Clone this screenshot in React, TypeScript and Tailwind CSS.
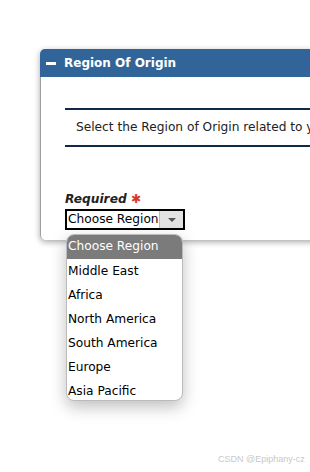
const regions = ["Middle East", "Africa", "North America", "South America", "Europe", "Asia Pacific"];

export default function App() {
  return (
    <div className="relative h-[472px] w-[310px] overflow-hidden bg-white" style={{ fontFamily: '"DejaVu Sans", Verdana, sans-serif' }}>
      <div className="ml-[40px] pt-[49px]">
        <div className="w-[400px] rounded-l-[5px] shadow-[0_2px_6px_rgba(0,0,0,0.35)]">
          <div className="flex h-[28px] items-center gap-[8px] rounded-tl-[5px] bg-[#31659a] pl-[6px] text-[12px] font-bold text-white">
            <span className="block h-[3px] w-[10px] bg-white" />
            <span>Region Of Origin</span>
          </div>
          <div className="h-[163px] rounded-bl-[5px] border-l border-[#a0a0a0] bg-white pl-[24px] pt-[31px]">
            <div className="border-y-2 border-[#0f2a48] py-[8px] pl-[11px] text-[12.2px] leading-[19px] whitespace-nowrap text-[#222]">
              Select the Region of Origin related to your request
            </div>
            <div className="mt-[44px] text-[12.2px] leading-[16px] font-bold italic text-[#222]">
              Required <span className="text-[#d83a1e] not-italic">✱</span>
            </div>
            <div className="mt-[2px] flex h-[21px] w-[120px] items-stretch border-2 border-black bg-white text-[12.2px] leading-[17px] text-black">
              <span className="flex-1 whitespace-nowrap pl-[1px]">Choose Region</span>
              <span className="flex w-[24px] shrink-0 items-center justify-center border-l border-[#bbb] bg-[#e3e3e3]">
                <svg width="8" height="4" viewBox="0 0 8 4"><path d="M0 0h8L4 4z" fill="#555" /></svg>
              </span>
            </div>
          </div>
        </div>
      </div>

      <div className="absolute left-[66px] top-[234px] w-[117px] overflow-hidden rounded-[8px] border border-[#bbb] bg-white text-[12.2px] text-black shadow-[0_6px_16px_rgba(0,0,0,0.25)]">
        <div className="h-[24px] bg-[#7b7b7b] pl-[1px] leading-[22px] text-white">Choose Region</div>
        {regions.map((r, i) => (
          <div key={r} className={i === regions.length - 1 ? "h-[21px] pl-[1px] leading-[24px]" : "h-[24px] pl-[1px] leading-[24px]"}>
            {r}
          </div>
        ))}
      </div>

      <div className="absolute left-[218px] top-[453px] text-[9px] text-[#c8c8c8]" style={{ fontFamily: '"Liberation Sans", Arial, sans-serif' }}>
        CSDN @Epiphany-cz
      </div>
    </div>
  );
}
